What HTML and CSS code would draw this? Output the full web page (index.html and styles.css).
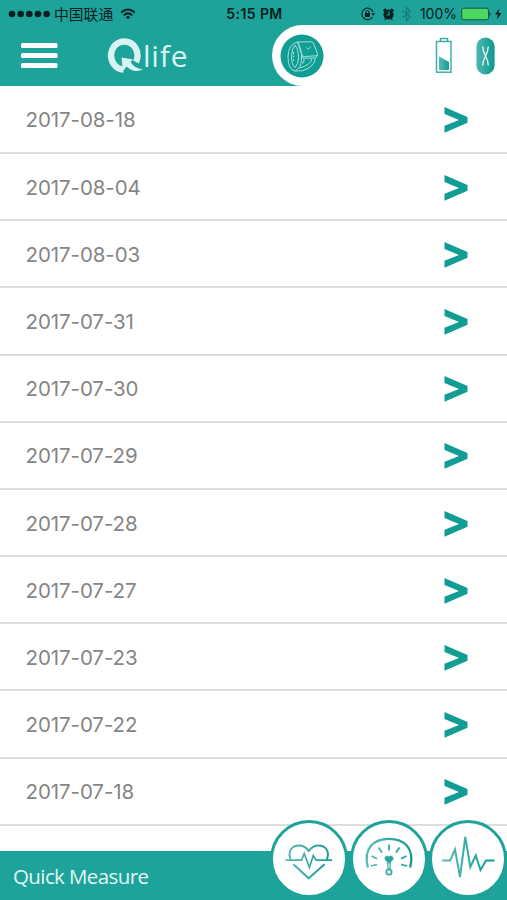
FILE: index.html
```html
<!DOCTYPE html>
<html lang="en">
<head>
<meta charset="utf-8">
<title>Qlife</title>
<link rel="stylesheet" href="styles.css">
</head>
<body>
<div class="status">
  <div class="carrier">
    <svg width="43" height="10" viewBox="0 0 43 10"><circle cx="4" cy="5" r="3.3"/><circle cx="12.7" cy="5" r="3.3"/><circle cx="21.3" cy="5" r="3.3"/><circle cx="30" cy="5" r="3.3"/><circle cx="38.6" cy="5" r="3.3"/></svg>
    <span class="carrier-name">中国联通</span>
    <svg class="wifi" width="16" height="12" viewBox="0 0 16 12" fill="none" stroke="#08201f" stroke-width="2"><path d="M1.2 4.6Q8-1.6 14.8 4.6M3.8 7.3Q8 3.4 12.2 7.3"/><path d="M5.7 8.9Q8 7.2 10.3 8.9L8 11.2Z" fill="#08201f" stroke="none"/></svg>
  </div>
  <time class="clock">5:15 PM</time>
  <div class="indicators">
    <svg width="60" height="16" viewBox="0 0 60 16" fill="none" stroke="#08201f"><path d="M12.6 11A5.8 5.8 0 1 1 13.2 6" stroke-width="1.1"/><path d="M11.2 7.3H15.2L13.3 9.8Z" fill="#08201f" stroke="none"/><rect x="5" y="7" width="5" height="4" fill="#08201f" stroke="none"/><path d="M6 7V6A1.5 1.5 0 0 1 9 6V7" stroke-width="1"/><circle cx="28.5" cy="8.5" r="5.1" fill="#08201f" stroke="none"/><path d="M23.5 5.1L26 3M33.5 5.1L31 3" stroke-width="2"/><path d="M24.7 14L26 12M32.3 14L31 12" stroke-width="1.2"/><path d="M29 5.5V9H26.6" stroke="#1ea39a" stroke-width="1.2"/><path d="M42.5 4.5L50.5 11L46.5 14.5V1.5L50.5 5L42.5 11.5" stroke="#147c78" stroke-width="1.2"/></svg>
    <span class="percent">100%</span>
    <svg width="42" height="14" viewBox="0 0 42 14"><rect x=".7" y="1.2" width="26.8" height="11.6" rx="2" fill="#4cd761" stroke="#164f48"/><path d="M28.5 5V9Q30.5 7 28.5 5Z" fill="#08201f"/><path d="M38.5 1.5L34 7.5H37L35.8 12.5L40.5 6H37.4Z" fill="#08201f"/></svg>
  </div>
</div>
<header class="header">
  <div class="brand">
    <svg class="menu" width="38" height="27" viewBox="0 0 38 27" fill="#fff"><rect x="1" y="1" width="36.5" height="5" rx="1.5"/><rect x="1" y="11" width="36.5" height="5" rx="1.5"/><rect x="1" y="21" width="36.5" height="5" rx="1.5"/></svg>
    <svg class="logo-q" width="38" height="38" viewBox="0 0 38 38"><path d="M17.5 32.5A13.2 14 0 1 1 30 25" fill="none" stroke="#d9f3f2" stroke-width="6.4"/><path d="M15.5 20.5L27 22.5L24.5 24.8Q28 31.5 37 32.5Q27.5 36.5 20.8 29.5L17 34Z" fill="#d9f3f2"/></svg>
    <span class="logo-text">life</span>
  </div>
  <div class="devices">
    <svg class="watch" width="44" height="44" viewBox="0 0 44 44" fill="none" stroke="#a5dfda" stroke-width="1"><circle cx="22" cy="22" r="21.5" fill="#109e94" stroke="none"/><path d="M17.5 8L31 7.8Q32.5 7.8 33.2 9L37.5 19.5Q38 21.7 36 21.8L24.5 22.5Q22.7 22.5 22 21Z"/><path d="M22 22L23 24.2L35.5 24L37.6 21"/><path d="M17.5 8Q8 10.5 8 23T15 37Q21.5 34 21.5 25Q22 15 17.5 8"/><path d="M15 11Q11.5 15 11.5 23T15 33.5Q18.5 30 18.5 24Q18.5 15 15 11"/><path d="M15 37Q23 38 29 34T35.5 24.5M22 29Q24 30 24 26V24.5M32 24.5Q31 31 19.5 34"/><path d="M26.5 13.5L28.2 15.2L31 12.6"/><path d="M13.5 18V28" stroke-dasharray="2 1.5"/></svg>
    <svg class="battery" width="18" height="37" viewBox="0 0 18 37" fill="none" stroke="#3fb0a8" stroke-width="1.5"><path d="M5.5 4V1.5H12.5V4"/><rect x="1.5" y="4.5" width="14.5" height="30.7"/><path d="M4 19.5L14 25V33H4Z" fill="url(#level)" stroke="none"/><defs><linearGradient id="level"><stop stop-color="#55b9b4"/><stop offset="1" stop-color="#159d93"/></linearGradient></defs></svg>
    <svg class="sync" width="19" height="38" viewBox="0 0 19 38"><defs><linearGradient id="pill"><stop stop-color="#51b6b1"/><stop offset="1" stop-color="#0c998e"/></linearGradient></defs><rect x=".4" y=".5" width="18.2" height="37" rx="9.1" fill="url(#pill)"/><path d="M6.7 9.5Q7 14.5 9.5 19T12.3 28.5M12.3 9.5Q12 14.5 9.5 19T6.7 28.5" fill="none" stroke="#e8faf8" stroke-width="1.3"/></svg>
  </div>
</header>
<main class="list">
  <div class="row"><span>2017-08-18</span><svg class="chevron" viewBox="0 0 24 26"><path d="M.5 0L23.5 10V15.7L.5 25.7V18.7L15 12.9L.5 7Z"/></svg></div>
  <div class="row"><span>2017-08-04</span><svg class="chevron" viewBox="0 0 24 26"><path d="M.5 0L23.5 10V15.7L.5 25.7V18.7L15 12.9L.5 7Z"/></svg></div>
  <div class="row"><span>2017-08-03</span><svg class="chevron" viewBox="0 0 24 26"><path d="M.5 0L23.5 10V15.7L.5 25.7V18.7L15 12.9L.5 7Z"/></svg></div>
  <div class="row"><span>2017-07-31</span><svg class="chevron" viewBox="0 0 24 26"><path d="M.5 0L23.5 10V15.7L.5 25.7V18.7L15 12.9L.5 7Z"/></svg></div>
  <div class="row"><span>2017-07-30</span><svg class="chevron" viewBox="0 0 24 26"><path d="M.5 0L23.5 10V15.7L.5 25.7V18.7L15 12.9L.5 7Z"/></svg></div>
  <div class="row"><span>2017-07-29</span><svg class="chevron" viewBox="0 0 24 26"><path d="M.5 0L23.5 10V15.7L.5 25.7V18.7L15 12.9L.5 7Z"/></svg></div>
  <div class="row"><span>2017-07-28</span><svg class="chevron" viewBox="0 0 24 26"><path d="M.5 0L23.5 10V15.7L.5 25.7V18.7L15 12.9L.5 7Z"/></svg></div>
  <div class="row"><span>2017-07-27</span><svg class="chevron" viewBox="0 0 24 26"><path d="M.5 0L23.5 10V15.7L.5 25.7V18.7L15 12.9L.5 7Z"/></svg></div>
  <div class="row"><span>2017-07-23</span><svg class="chevron" viewBox="0 0 24 26"><path d="M.5 0L23.5 10V15.7L.5 25.7V18.7L15 12.9L.5 7Z"/></svg></div>
  <div class="row"><span>2017-07-22</span><svg class="chevron" viewBox="0 0 24 26"><path d="M.5 0L23.5 10V15.7L.5 25.7V18.7L15 12.9L.5 7Z"/></svg></div>
  <div class="row"><span>2017-07-18</span><svg class="chevron" viewBox="0 0 24 26"><path d="M.5 0L23.5 10V15.7L.5 25.7V18.7L15 12.9L.5 7Z"/></svg></div>
</main>
<footer class="footer">
  <span class="measure">Quick Measure</span>
  <div class="actions">
    <div class="action"><svg viewBox="0 0 78 78"><defs><linearGradient id="line" gradientUnits="userSpaceOnUse" x1="15" y1="0" x2="63" y2="0"><stop stop-color="#5bbab6"/><stop offset="1" stop-color="#129c92"/></linearGradient></defs><path d="M20.7 40C17 30 23 25.5 29 25.5C34 25.5 36.5 28 38.7 31C41 28 43.5 25.5 48.5 25.5C54.5 25.5 60.5 30 56.7 40M23.4 44.2L38.7 58.3L54.6 44.2" stroke-width="2"/><path d="M15.5 40.2H31.5L34.2 33.5L39.4 47.5L43.3 35.5L46 40.2H62" stroke-width="1.7"/></svg></div>
    <div class="action"><svg viewBox="0 0 78 78"><path d="M17.8 47.5C13 28 24 18.8 39 18.8S65 28 60.2 47.5" stroke-width="2.3"/><path d="M39 24.5V30.5M28.5 27.5L32 32.5M49.5 27.5L46 32.5M21.5 36L27 38.8M56.5 36L51 38.8M20.8 46L27 44.5M57.2 46L51 44.5" stroke-width="1.8"/><path d="M39 43.5L35.5 40C33.5 37 37.5 34.5 39 37.3C40.5 34.5 44.5 37 42.5 40Z" fill="#27a59d"/><path d="M37.8 42L38 49.5M40.2 42L40 49.5" stroke-width="1.2"/><circle cx="39" cy="52" r="2.7" stroke-width="1.7"/></svg></div>
    <div class="action"><svg viewBox="0 0 78 78"><path d="M13 40.5H21.2L26 29.5L31 57L36.3 17L41.3 47L46.8 35.5L51.5 50L57 40.5H65.5" stroke-width="2"/></svg></div>
  </div>
</footer>
</body>
</html>
```
FILE: styles.css
```css
* { box-sizing: border-box; }
body {
  margin: 0;
  width: 507px;
  height: 900px;
  display: flex;
  flex-direction: column;
  overflow: hidden;
  background: #fff;
  font-family: Inter, "Noto Sans CJK SC", sans-serif;
}
svg { display: block; flex: none; }
.status {
  height: 25px;
  padding: 2px 4px 0 8px;
  display: grid;
  grid-template-columns: 1fr auto 1fr;
  align-items: center;
  background: #1ea39a;
  color: #08201f;
  fill: #08201f;
}
.carrier, .indicators { display: flex; align-items: center; white-space: nowrap; }
.carrier-name { margin-left: 3px; font: 14.8px/20px "Noto Sans CJK SC", sans-serif; }
.wifi { margin-left: 7px; }
.clock { font-size: 14px; font-weight: 600; line-height: 20px; letter-spacing: .4px; margin-right: 2px; }
.indicators { justify-content: flex-end; }
.percent { font-size: 14px; line-height: 20px; margin: 0 4px 0 0; }
.header {
  height: 61px;
  flex: none;
  display: flex;
  background: #1ea39a;
}
.brand { width: 272px; display: flex; align-items: center; padding-left: 20px; }
.logo-q { margin-left: 48px; }
.logo-text { margin-left: -1px; color: #d9f3f2; font: 500 30px/40px "Open Sans", sans-serif; letter-spacing: .8px; }
.devices {
  flex: 1;
  display: flex;
  align-items: center;
  padding-left: 8px;
  border-radius: 31px 0 0 31px;
  background: #fff;
}
.battery { margin-left: 111px; }
.sync { margin-left: 23px; }
.list { flex: 1; padding-top: .8px; }
.row {
  height: 67.2px;
  padding: 2px 39px 0 25.5px;
  display: flex;
  align-items: center;
  justify-content: space-between;
  border-bottom: 2px solid #dedede;
  color: #858585;
  font-size: 20.5px;
  line-height: 28px;
  letter-spacing: -.08px;
}
.chevron { width: 24px; height: 26px; fill: #109e94; }
.footer {
  height: 49px;
  flex: none;
  display: flex;
  align-items: center;
  justify-content: space-between;
  padding-left: 13px;
  background: #1ea39a;
}
.measure { color: #e2f7f5; font: 20.5px/30px "Open Sans", sans-serif; letter-spacing: -.6px; }
.actions { display: flex; gap: 1.5px; margin-top: -33px; }
.action {
  width: 78px;
  height: 78px;
  border: 3px solid #1ea39a;
  border-radius: 50%;
  background: #fff;
}
.action svg { width: 78px; height: 78px; margin: -3px; fill: none; stroke: url(#line); }
```
